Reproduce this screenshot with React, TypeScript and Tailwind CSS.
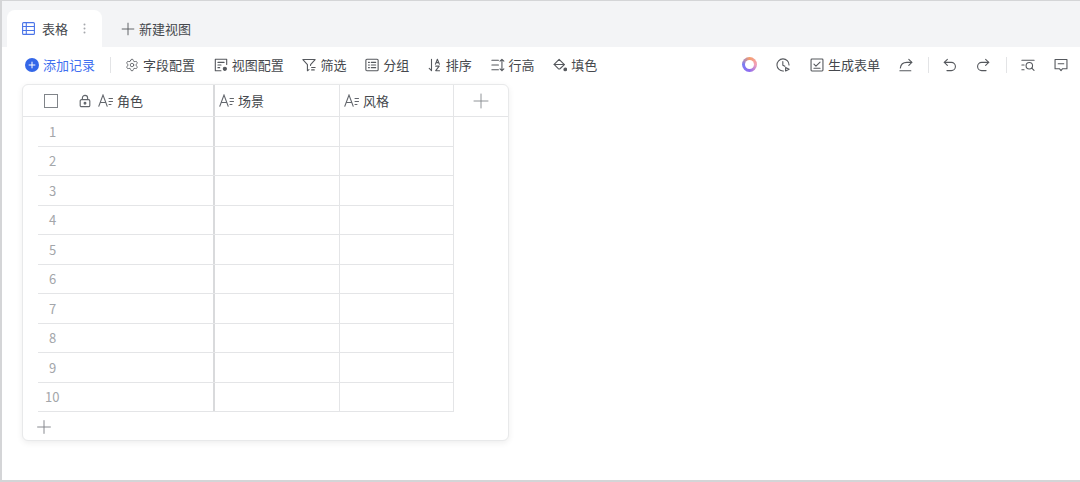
import { Plus, Settings } from "lucide-react";
import type { ReactNode } from "react";

const font = { fontFamily: '"Noto Sans CJK SC", "Liberation Sans", sans-serif' };

function Icon({ size = 14, className = "text-[#55585d]", children }: { size?: number; className?: string; children: ReactNode }) {
  return (
    <svg
      width={size}
      height={size}
      viewBox="0 0 16 16"
      fill="none"
      stroke="currentColor"
      strokeWidth="1.25"
      strokeLinecap="round"
      strokeLinejoin="round"
      className={`shrink-0 ${className}`}
    >
      {children}
    </svg>
  );
}

const GearIcon = () => <Settings size={14} strokeWidth={1.4} className="shrink-0 text-[#55585d]" />;
const ViewIcon = () => (
  <Icon>
    <path d="M14.5 7.5V1.5h-13v13H8" />
    <path d="M4.5 5h7M4.5 8h3.5M4.5 11h2" />
    <circle cx="12.4" cy="12.4" r="1.8" fill="currentColor" />
  </Icon>
);
const FilterIcon = () => (
  <Icon>
    <path d="M1 1.8h14L9.8 7.5v1M1 1.8l5.2 5.7v7L8 13.3" />
    <path d="M11 10.8h4M11 13.6h3" />
  </Icon>
);
const GroupIcon = () => (
  <Icon>
    <rect x="1" y="1.5" width="14" height="13" rx="1.2" />
    <path d="M4 5h1M4 8h1M4 11h1M7.2 5h5M7.2 8h5M7.2 11h5" />
  </Icon>
);
const SortIcon = () => (
  <Icon>
    <path d="M4 1.5v13l-2.6-2.6" />
    <path d="M8.5 7l2.2-5.5L13 7M9.2 5.3h3" />
    <path d="M8.8 9.3h4L8.8 14.5h4.4" />
  </Icon>
);
const RowHeightIcon = () => (
  <Icon>
    <path d="M1 2.5h7.5M1 8h7.5M1 13.5h7.5" />
    <path d="M12.5 1.5v13M10.3 3.7l2.2-2.2 2.2 2.2M10.3 12.3l2.2 2.2 2.2-2.2" />
  </Icon>
);
const FillIcon = () => (
  <Icon>
    <path d="M7 1.5l6 6-5 4.8a1.2 1.2 0 0 1-1.7 0L1.3 7.3z" />
    <path d="M1.3 7.5h11.5" />
    <circle cx="14" cy="13" r="1.5" fill="currentColor" />
  </Icon>
);
const ClockIcon = () => (
  <Icon>
    <path d="M8.5 14.8A6.9 6.9 0 1 1 14.9 8" />
    <path d="M7.8 4v4.2l2.4 1.3" />
    <path d="M11 10.8l4 2-4 2z" />
  </Icon>
);
const FormIcon = () => (
  <Icon>
    <rect x="1.2" y="1.2" width="13.6" height="13.6" rx="1" />
    <path d="M4.5 7l2.3 2.3L11.5 4.6M4.5 11.8h7" />
  </Icon>
);
const ShareIcon = () => (
  <Icon>
    <path d="M1 14.5h12.5" />
    <path d="M1.5 11.5C2 7.5 5 5 9 5h5.5" />
    <path d="M11.2 1.5l3.5 3.5-3.5 3.5" />
  </Icon>
);
const UndoIcon = () => (
  <Icon>
    <path d="M5 1.5L1.5 5 5 8.5" />
    <path d="M1.5 5h8a4.7 4.7 0 0 1 0 9.4H4.5" />
  </Icon>
);
const RedoIcon = () => (
  <Icon>
    <path d="M11 1.5L14.5 5 11 8.5" />
    <path d="M14.5 5h-8a4.7 4.7 0 0 0 0 9.4h5" />
  </Icon>
);
const SearchListIcon = () => (
  <Icon>
    <path d="M1 2.5h14M1 8h2.5M1 13.5h2.5" />
    <circle cx="9.5" cy="8.8" r="3.7" />
    <path d="M12.3 11.6l2.6 2.6" />
  </Icon>
);
const CommentIcon = () => (
  <Icon>
    <path d="M1.2 1.8h13.6v10.4H9.8L8 14.4l-1.8-2.2h-5z" />
    <path d="M4.8 6.5h6.4" />
  </Icon>
);

function TextFieldIcon() {
  return (
    <svg width="15" height="13" viewBox="0 0 15 13" fill="none" stroke="#62666c" strokeWidth="1.05" strokeLinecap="round" className="shrink-0">
      <path d="M.8 12.2L5 1l4.2 11.2M2.3 8.5h5.4" />
      <path d="M11 4.5h3.5M11 7.5h3.5M11 10.5h2" />
    </svg>
  );
}

function Divider({ className }: { className: string }) {
  return <div className={`h-4 w-px bg-[#e3e4e6] ${className}`} />;
}

function ToolItem({ icon, label }: { icon: ReactNode; label: string }) {
  return (
    <div className="flex items-center gap-[4px] text-[13px] leading-none text-[#45484d]">
      {icon}
      <span>{label}</span>
    </div>
  );
}

function Toolbar() {
  return (
    <div className="flex h-[37px] items-center justify-between pb-[2px] pl-[23px] pr-[12px]">
      <div className="flex items-center">
        <div className="flex items-center gap-1 text-[13px] leading-none text-[#3f6ff0]">
          <span className="flex h-[14px] w-[14px] items-center justify-center rounded-full bg-[#3467e8]">
            <Plus size={10} strokeWidth={2.4} className="text-white" />
          </span>
          <span>添加记录</span>
        </div>
        <Divider className="ml-[15px] mr-[14px]" />
        <div className="flex items-center gap-[18.7px]">
          <ToolItem icon={<GearIcon />} label="字段配置" />
          <ToolItem icon={<ViewIcon />} label="视图配置" />
          <ToolItem icon={<FilterIcon />} label="筛选" />
          <ToolItem icon={<GroupIcon />} label="分组" />
          <ToolItem icon={<SortIcon />} label="排序" />
          <ToolItem icon={<RowHeightIcon />} label="行高" />
          <ToolItem icon={<FillIcon />} label="填色" />
        </div>
      </div>
      <div className="flex items-center">
        <div className="h-[15px] w-[15px] rounded-full bg-[conic-gradient(#f59e6c,#f3a0b8,#8f6cf0,#7a7cf5,#f59e6c)] p-[3px]">
          <div className="h-full w-full rounded-full bg-white" />
        </div>
        <div className="ml-[19px]">
          <ClockIcon />
        </div>
        <div className="ml-[20px]">
          <ToolItem icon={<FormIcon />} label="生成表单" />
        </div>
        <div className="ml-[19px]">
          <ShareIcon />
        </div>
        <Divider className="ml-[15px] mr-[14px]" />
        <UndoIcon />
        <div className="ml-[19px]">
          <RedoIcon />
        </div>
        <Divider className="ml-[16px] mr-[14px]" />
        <SearchListIcon />
        <div className="ml-[19px]">
          <CommentIcon />
        </div>
      </div>
    </div>
  );
}

function HeaderCell({ label, className }: { label: string; className: string }) {
  return (
    <div className={`flex items-center gap-[4px] text-[13px] leading-none text-[#45484d] ${className}`}>
      <TextFieldIcon />
      <span className="pb-[1px]">{label}</span>
    </div>
  );
}

function DataTable() {
  const rows = [1, 2, 3, 4, 5, 6, 7, 8, 9, 10];
  return (
    <div className="ml-[22px] h-[357px] w-[487px] rounded-[6px] border border-[#e8e9ea] bg-white shadow-[0_2px_6px_rgba(0,0,0,0.07)]">
      <div className="flex h-[32px] border-b border-[#e4e5e7]">
        <div className="flex w-[192px] items-center border-r-2 border-[#d9dadc]">
          <span className="ml-[21px] h-[14px] w-[14px] border border-[#808489]" />
          <svg width="14" height="14" viewBox="0 0 16 16" fill="none" stroke="#62666c" strokeWidth="1.3" className="ml-[20px] mr-[6px] shrink-0">
            <rect x="2.5" y="6.5" width="11" height="8" rx="1.5" />
            <path d="M5 6.5V4.5a3 3 0 0 1 6 0v2" />
            <circle cx="8" cy="10.5" r="1" fill="#62666c" />
          </svg>
          <HeaderCell label="角色" className="" />
        </div>
        <HeaderCell label="场景" className="w-[125px] border-r border-[#e4e5e7] pl-[4px]" />
        <HeaderCell label="风格" className="w-[114px] border-r border-[#e4e5e7] pl-[4px]" />
        <div className="flex flex-1 items-center justify-center">
          <Plus size={24} strokeWidth={0.9} className="text-[#85888d]" />
        </div>
      </div>
      <div className="ml-[15px]">
        {rows.map((n) => (
          <div key={n} className="flex h-[29.5px] w-[416px] border-b border-[#e4e5e7]">
            <div className="flex w-[177px] items-center border-r-2 border-[#d9dadc] pl-[7px] text-[13px] leading-none text-[#a3a6aa]" style={font}>
              <span className={n === 10 ? "" : "ml-[4px]"}>{n}</span>
            </div>
            <div className="w-[125px] border-r border-[#e4e5e7]" />
            <div className="w-[114px] border-r border-[#e4e5e7]" />
          </div>
        ))}
        <div className="flex h-[29px] items-center">
          <Plus size={22} strokeWidth={1} className="-ml-[5px] text-[#7d8085]" />
        </div>
      </div>
    </div>
  );
}

export default function App() {
  return (
    <div className="h-[482px] w-[1080px] overflow-hidden bg-white" style={font}>
      <div className="h-full w-full border-b-2 border-l-2 border-t border-[#d4d5d7]">
        <div className="flex h-[46px] items-end bg-[#f3f4f6] pl-[5px]">
          <div className="flex h-[37px] w-[95px] items-center rounded-t-[8px] bg-white pl-[15px] text-[13px] leading-none text-[#45484d]">
            <svg width="13" height="13" viewBox="0 0 13 13" fill="none" stroke="#4a74e8" strokeWidth="1.1" className="mr-[7px] shrink-0">
              <rect x="0.6" y="0.6" width="11.8" height="11.8" rx="1" />
              <path d="M4.3 0.6v11.8M0.6 4.5h11.8M0.6 8.5h11.8" />
            </svg>
            <span>表格</span>
            <svg width="3" height="11" viewBox="0 0 3 11" fill="#a5a8ac" className="ml-[15px]">
              <circle cx="1.5" cy="1.5" r="1" />
              <circle cx="1.5" cy="5.5" r="1" />
              <circle cx="1.5" cy="9.5" r="1" />
            </svg>
          </div>
          <div className="ml-[16px] flex h-[37px] items-center gap-[1px] text-[13px] leading-none text-[#45484d]">
            <Plus size={20} strokeWidth={1.1} className="text-[#55585d]" />
            <span>新建视图</span>
          </div>
        </div>
        <Toolbar />
        <div className="-ml-[2px]">
          <DataTable />
        </div>
      </div>
    </div>
  );
}
